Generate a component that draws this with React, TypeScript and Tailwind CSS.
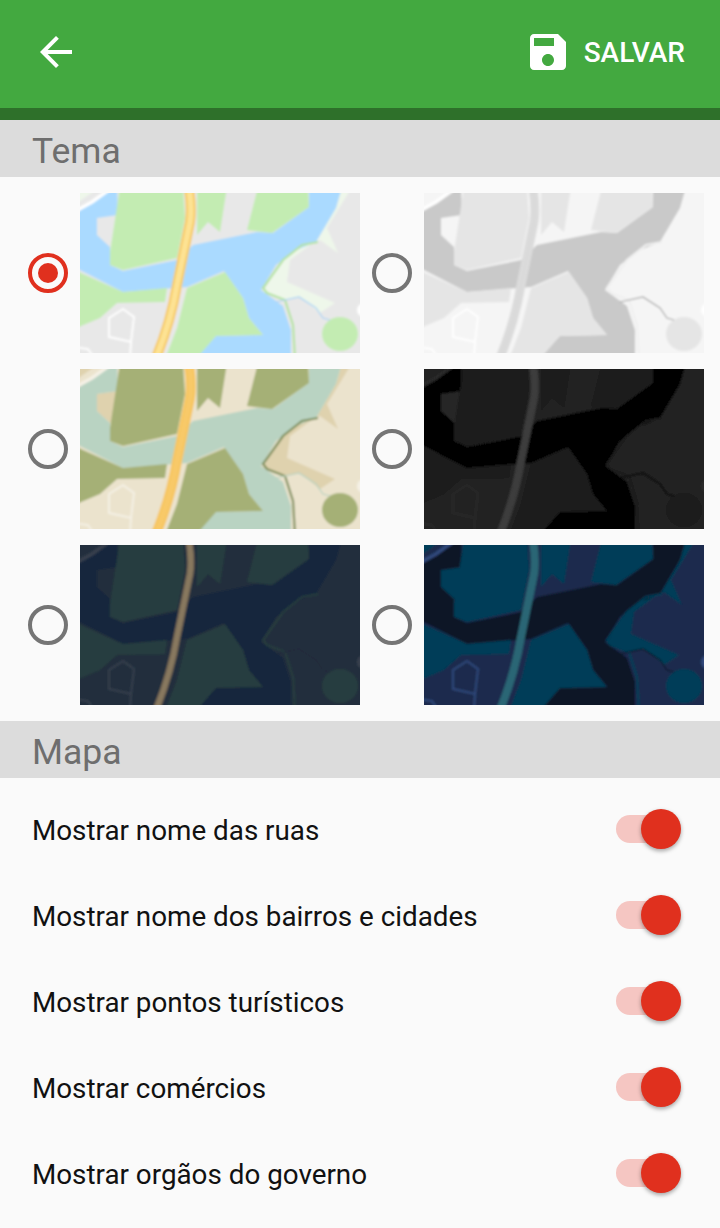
import React from "react";

type Palette = {
  land: string; water: string; park: string; scrub: string; scrub2: string; road: string; edge: string; line: string; river: string; shore: string; roadW: number;
};

const themes: Palette[] = [
  { land: "#e8e8e8", water: "#aadaff", park: "#c3ecb2", scrub: "#eef7ea", scrub2: "#e8e8e8", road: "#fde293", edge: "#f6c85f", line: "#ffffff", river: "#a9d3f5", shore: "#b5e3a3", roadW: 10 },
  { land: "#f5f5f5", water: "#c9c9c9", park: "#e5e5e5", scrub: "#f5f5f5", scrub2: "#f5f5f5", road: "#dadada", edge: "#dcdcdc", line: "#ffffff", river: "#a8a8a8", shore: "#f0f0f0", roadW: 9 },
  { land: "#ebe3cd", water: "#b9d3c2", park: "#a5b076", scrub: "#dfd2ae", scrub2: "#dfd2ae", road: "#f8c967", edge: "#f6c560", line: "#f5f1e6", river: "#b9d3c2", shore: "#7f8f5c", roadW: 10 },
  { land: "#212121", water: "#000000", park: "#1b1b1b", scrub: "#212121", scrub2: "#262626", road: "#3c3c3c", edge: "#3c3c3c", line: "#2c2c2c", river: "#000000", shore: "#1f1f1f", roadW: 8 },
  { land: "#242f3e", water: "#17263c", park: "#263c3f", scrub: "#242f3e", scrub2: "#242f3e", road: "#8a7a60", edge: "#7f7059", line: "#38414e", river: "#1f2a3a", shore: "#263c3f", roadW: 7 },
  { land: "#1d2c4d", water: "#0e1626", park: "#023e58", scrub: "#023e58", scrub2: "#023e58", road: "#2c6675", edge: "#2c6675", line: "#304a7d", river: "#0e1626", shore: "#023e58", roadW: 8 },
];

function MapThumb({ p, id }: { p: Palette; id: string }) {
  const waterPts =
    "-6,22 20,2 37,-6 38,22 17,25 17,42 30,54 30,72 43,78 97,67 113,52 177,39 193,40 229,14 229,-6 262,-6 256,15 236,49 216,57 196,72 181,97 203,113 211,137 211,166 112,166 136,143 183,142 169,125 163,105 144,78 107,94 43,99 -6,74";
  const road = "M109 -5 Q112 16 110 29 L97 92 Q91 128 76 165";
  return (
    <svg width="280" height="160" viewBox="0 0 280 160" className="block">
      <defs>
        <filter id={id} x="-5%" y="-5%" width="110%" height="110%">
          <feGaussianBlur stdDeviation="0.9" />
        </filter>
      </defs>
      <g filter={`url(#${id})`}>
        <rect x="-8" y="-8" width="296" height="176" fill={p.land} />
        <polygon points="-6,-6 20,-6 -6,12" fill={p.scrub} />
        <polygon points="262,-6 272,-6 247,35 258,60 240,47 236,49 256,15" fill={p.scrub} />
        <polygon points="237,47 210,67 207,89 255,110 240,120 220,104 205,107 183,99 198,72 216,57" fill={p.scrub} />
        <polygon points="17,25 38,22 34,54 30,54 17,42" fill={p.scrub2} />
        <polygon points={waterPts} fill={p.water} />
        <polygon points="40,-6 103,-6 105,25 97,65 43,77 30,72 30,59" fill={p.park} />
        <polygon points="117,-6 147,-6 140,39 128,29 117,42" fill={p.park} />
        <polygon points="178,-6 228,-6 229,14 192,40 167,37" fill={p.park} />
        <polygon points="-6,77 43,99 87,95 85,109 37,110 20,125 -6,136" fill={p.park} />
        <polygon points="107,95 145,79 163,105 169,125 183,142 136,143 116,166 85,166 97,135" fill={p.park} />
        <ellipse cx="260" cy="141" rx="18" ry="17" fill={p.park} />
        <polyline points="238,49 222,52 203,67 183,95 187,100 205,107 213,132 215,166" fill="none" stroke={p.shore} strokeWidth="2.2" />
        <polyline points="196,109 219,104 236,115 243,125 250,127" fill="none" stroke={p.river} strokeWidth="1.2" />
        <polyline points="-6,19 12,9 30,-4" fill="none" stroke={p.line} strokeWidth="3.5" />
        <path d="M29 125 L43 116 L54 124 L51 149 L29 144 Z M51 149 L50 165" fill="none" stroke={p.line} strokeWidth="1.8" />
        <polyline points="-6,154 8,156 14,165" fill="none" stroke={p.line} strokeWidth="1.8" />
        <circle cx="284" cy="117" r="7" fill={p.line} />
        <path d={road} fill="none" stroke={p.edge} strokeWidth={p.roadW} />
        <path d={road} fill="none" stroke={p.road} strokeWidth={p.roadW - 4} />
      </g>
    </svg>
  );
}

function Radio({ on }: { on?: boolean }) {
  return (
    <div className={"flex h-10 w-10 shrink-0 items-center justify-center rounded-full border-4 " + (on ? "border-[#e0301e]" : "border-[#757575]")}>
      {on ? <div className="h-5 w-5 rounded-full bg-[#e0301e]" /> : null}
    </div>
  );
}

function Section({ title }: { title: string }) {
  return (
    <div className="flex h-[57px] items-center bg-[#dcdcdc] pl-8 pt-[6px] text-[35.5px] leading-none text-[#6e6e6e]">{title}</div>
  );
}

function Toggle() {
  return (
    <div className="relative -mt-[2px] h-7 w-[60px] rounded-full bg-[#f5c6c2]">
      <div className="absolute right-[-5px] top-[-6px] h-10 w-10 rounded-full bg-[#e0301e] shadow-[0_2px_4px_rgba(0,0,0,0.35)]" />
    </div>
  );
}

const rows = [
  "Mostrar nome das ruas",
  "Mostrar nome dos bairros e cidades",
  "Mostrar pontos turísticos",
  "Mostrar comércios",
  "Mostrar orgãos do governo",
];

export default function App() {
  return (
    <div className="h-[1228px] w-[720px] overflow-hidden bg-[#fafafa] font-['Roboto',sans-serif]">
      <header className="flex h-[108px] items-center justify-between bg-[#43a940] pb-1 pl-8 pr-[35px]">
        <svg width="48" height="48" viewBox="0 0 24 24" fill="#ffffff">
          <path d="M20 11H7.83l5.59-5.59L12 4l-8 8 8 8 1.41-1.41L7.83 13H20v-2z" />
        </svg>
        <div className="flex items-center gap-3">
          <svg width="48" height="48" viewBox="0 0 24 24" fill="#ffffff">
            <path d="M17 3H5c-1.11 0-2 .9-2 2v14c0 1.1.89 2 2 2h14c1.1 0 2-.9 2-2V7l-4-4zm-5 16c-1.66 0-3-1.34-3-3s1.34-3 3-3 3 1.34 3 3-1.34 3-3 3zm3-10H5V5h10v4z" />
          </svg>
          <span className="pt-[2px] text-[28px] font-medium leading-none text-white">SALVAR</span>
        </div>
      </header>
      <div className="h-3 bg-[#2e702a]" />
      <Section title="Tema" />
      <div className="grid grid-cols-[332px_332px] gap-x-[12px] gap-y-4 py-4 pl-7">
        {themes.map((t, i) => (
          <div key={i} className="flex items-center gap-3">
            <Radio on={i === 0} />
            <MapThumb p={t} id={"soft" + i} />
          </div>
        ))}
      </div>
      <Section title="Mapa" />
      <div className="pt-[9px]">
        {rows.map((r) => (
          <div key={r} className="flex h-[86px] items-center justify-between pl-8 pr-11">
            <span className="pt-[2px] text-[27.8px] leading-none text-[#111111]">{r}</span>
            <Toggle />
          </div>
        ))}
      </div>
    </div>
  );
}
